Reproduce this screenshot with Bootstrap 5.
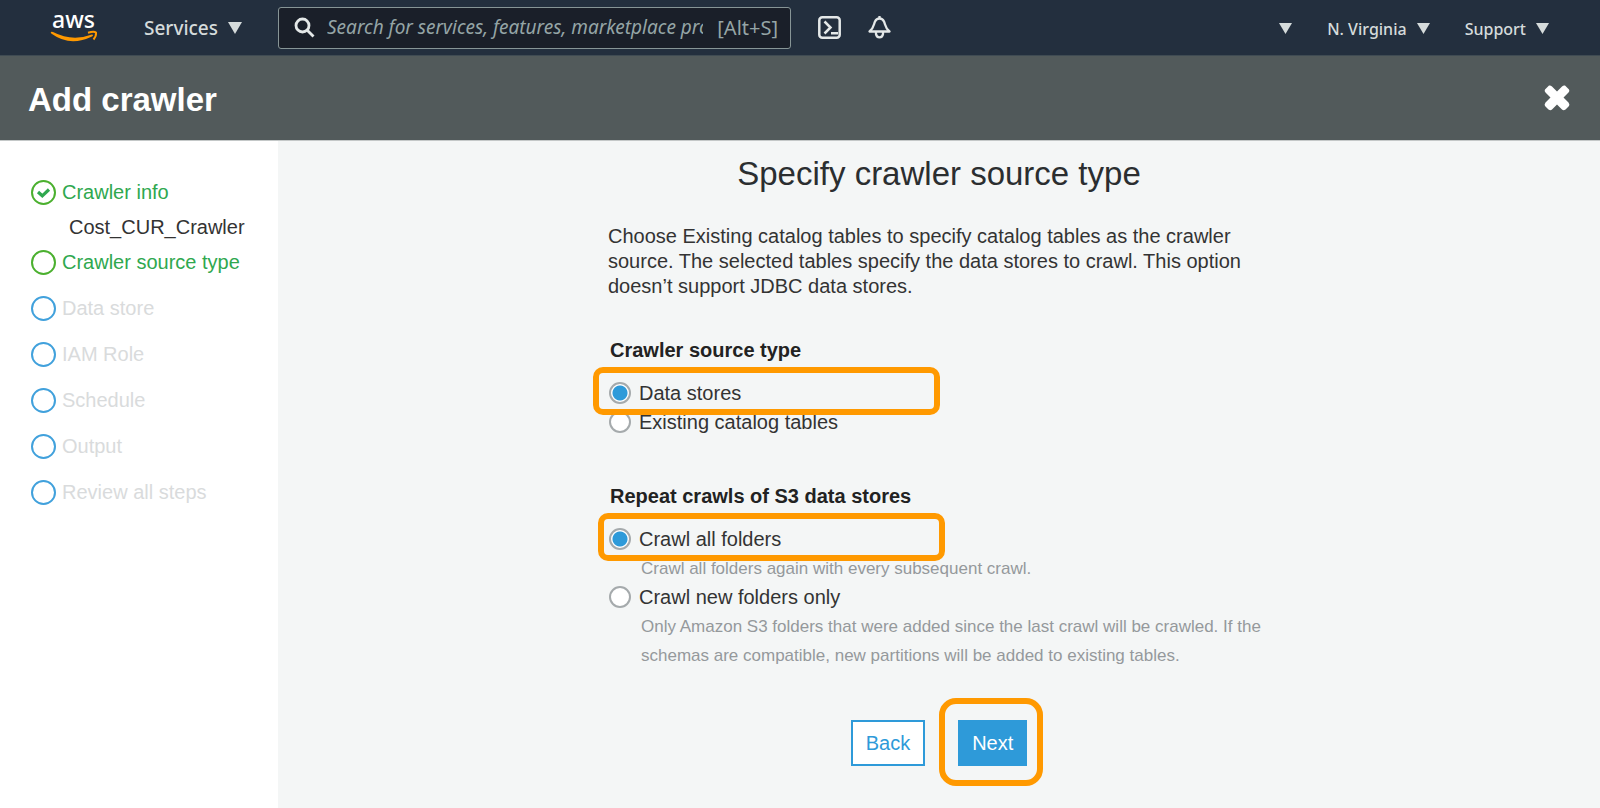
<!DOCTYPE html>
<html lang="en">
<head>
<meta charset="utf-8">
<meta name="viewport" content="width=device-width, initial-scale=1">
<title>Add crawler</title>
<link rel="stylesheet" href="https://cdn.jsdelivr.net/npm/bootstrap@5.3.0/dist/css/bootstrap.min.css">
<style>
  :root { --console-font: "Noto Sans", "Open Sans", sans-serif; --accent: #2e9ad9; --mark-orange: #ff9900; }
  body { font-family: "Liberation Sans", Arial, sans-serif; font-size: 20px; line-height: 25px; color: #333; background: #f4f6f6; }
  .topbar { background: #232f3e; height: 56px; font-family: var(--console-font); color: #d5dbdb; border-bottom: 1px solid #3f4b53; padding: 0 51px 0 50px; }
  .topbar button { color: #d5dbdb; background: none; border: 0; padding: 0; line-height: 24px; font-weight: 500; }
  .topbar svg { display: block; }
  .services { font-size: 19px; gap: 10px; margin-left: 46px; }
  .search-box { width: 513px; height: 42px; margin: 0 27px 0 36px; padding: 0 12px 0 15px; background: #1a1f29; border: 1px solid #879596; border-radius: 3px; font-size: 19px; color: #95a5a6; }
  .search-box input { min-width: 0; background: none; border: 0; outline: 0; padding: 0; margin: 0 14px 0 12px; color: inherit; font-style: italic; }
  .search-box input::placeholder { color: #95a5a6; opacity: 1; }
  .shortcut { font-size: 20px; }
  .icon-tools { gap: 27px; }
  .right-menu { gap: 35px; font-size: 16px; padding-top: 2px; }
  .right-menu button { gap: 10px; }
  .titlebar { background: #525a5b; height: 85px; padding: 0 28px; border-bottom: 1px solid #c4c8c8; }
  .titlebar h1 { font-size: 33px; line-height: 40px; color: #fff; }
  .titlebar button { background: none; border: 0; padding: 0; }
  .steps { width: 278px; background: #fff; padding: 39px 0 0 31px; }
  .steps ol { gap: 21px; }
  .steps a { color: #d9dbdc; text-decoration: none; gap: 6px; }
  .steps .done { color: #2fa84f; }
  .ring { width: 25px; height: 25px; border: 2px solid #41a1dc; border-radius: 50%; flex: none; }
  .done .ring { border-color: #4bb02f; }
  .crawler-name { padding-left: 38px; margin-top: 10px; margin-bottom: -11px; }
  .panel { padding: 13px 0 20px; }
  .panel h2 { font-size: 33px; line-height: 40px; color: #2b2e30; margin-bottom: 30px; }
  .form-area { width: 662px; max-width: 100%; }
  .intro { margin-bottom: 39px; }
  .form-area fieldset { padding-left: 1px; margin-bottom: 47px; }
  .form-area legend { font-size: 20px; line-height: 25px; font-weight: 700; color: #222; margin-bottom: 16px; padding-left: 1px; }
  .choice { min-height: 29px; gap: 8px; line-height: 29px; }
  .choice input { appearance: none; width: 22px; height: 22px; margin: 0 0 2px; flex: none; border: 2px solid #a5aaac; border-radius: 50%; background: #fff; }
  .choice input:checked { background: radial-gradient(circle, var(--accent) 0 7px, #fff 8px); }
  .hint { font-size: 17px; line-height: 29px; color: #95999c; padding-left: 32px; }
  .marked { position: relative; }
  .marked::after { content: ""; position: absolute; border: 6px solid var(--mark-orange); border-radius: 10px; pointer-events: none; }
  .choice.marked::after { width: 347px; height: 48px; top: -12px; left: -16px; }
  .choice.marked.inset::after { left: -11px; }
  .marked-button::after { inset: -22px -16px -20px -19px; border-radius: 17px; }
  .actions { gap: 33px; padding-top: 3px; }
  .actions .btn { --bs-btn-border-radius: 0; --bs-btn-font-size: 20px; --bs-btn-line-height: 28px; --bs-btn-padding-y: 7px; --bs-btn-padding-x: 13px; --bs-btn-border-width: 2px; --bs-btn-border-color: var(--accent); }
  .actions .back { --bs-btn-bg: #fff; --bs-btn-color: var(--accent); }
  .actions .next { --bs-btn-bg: var(--accent); --bs-btn-color: #fff; --bs-btn-padding-x: 12px; }
</style>
<script src="https://cdn.jsdelivr.net/npm/bootstrap@5.3.0/dist/js/bootstrap.bundle.min.js"></script>
</head>
<body class="min-vh-100 d-flex flex-column">
<header class="topbar d-flex align-items-center">
  <a href="#" aria-label="AWS home"><svg width="48" height="48" viewBox="0 0 48 48"><text x="2" y="24" font-family="Noto Sans, sans-serif" font-size="23" font-weight="500" fill="#fff">aws</text><path d="M1 28Q0 29 2 30Q20 43 42 32.500Q44 31 42 30.500Q22 38 3 28Q1.500 27.300 1 28Z" fill="#ff9900"/><path d="M38 28.800Q44 27 46 28.500Q46.500 32 43.500 35.500" fill="none" stroke="#ff9900" stroke-width="2" stroke-linejoin="round"/></svg></a>
  <button type="button" class="services d-flex align-items-center"><span>Services</span><svg width="14" height="12"><path d="M0 0H14L7 12Z" fill="currentColor"/></svg></button>
  <div class="search-box d-flex align-items-center">
    <svg class="flex-shrink-0" width="21" height="21" viewBox="0 0 21 21" fill="none" stroke="#e4e8e8" stroke-width="2.800"><circle cx="8.500" cy="8.500" r="6.500"/><path d="M13 13L19.500 19.500"/></svg>
    <input type="text" class="flex-grow-1" aria-label="Search" placeholder="Search for services, features, marketplace products, and docs">
    <span class="shortcut">[Alt+S]</span>
  </div>
  <div class="icon-tools d-flex">
    <button type="button" aria-label="CloudShell"><svg width="23" height="23" viewBox="0 0 23 23" fill="none" stroke="#e4e8e8" stroke-width="2.500"><rect x="1.300" y="1.300" width="20.400" height="20.400" rx="3"/><path d="M6.500 5.500L12.500 11.500L6.500 17.500M13 17.200H20"/></svg></button>
    <button type="button" aria-label="Notifications"><svg width="23" height="23" viewBox="0 0 23 23" fill="none" stroke="#e4e8e8" stroke-width="2.300" stroke-linejoin="round"><path d="M1.500 15.500C6 12 5.500 9 7 5.500Q8.500 2.500 11.500 2.500T16 5.500C17.500 9 17 12 21.500 15.500Z"/><path d="M11.500 0V2.500M8 16V18Q8.500 21.300 11.500 21.300T15 18V16"/></svg></button>
  </div>
  <nav class="right-menu d-flex align-items-center ms-auto" aria-label="Account">
    <button type="button" aria-label="Account"><svg width="13" height="11"><path d="M0 0H13L6.500 11Z" fill="currentColor"/></svg></button>
    <button type="button" class="d-flex align-items-center"><span>N. Virginia</span><svg width="13" height="11"><path d="M0 0H13L6.500 11Z" fill="currentColor"/></svg></button>
    <button type="button" class="d-flex align-items-center"><span>Support</span><svg width="13" height="11"><path d="M0 0H13L6.500 11Z" fill="currentColor"/></svg></button>
  </nav>
</header>
<div class="titlebar d-flex align-items-center justify-content-between">
  <h1 class="fw-bold m-0 pt-1">Add crawler</h1>
  <button type="button" aria-label="Close"><svg class="d-block" width="30" height="30" viewBox="0 0 30 30"><path d="M7 2.500Q8.500 2 10 3.500L15 8.500L20 3.500Q21.500 2 23 2.500L27 6.500Q28 8 26.500 9.500L21.500 14.500L26.500 19.500Q28 21.500 27 23L23.500 26.500Q21.500 28 20 26.500L15 21.500L10 26.500Q8.500 28 6.500 26.500L3 23Q2 21.500 3.500 19.500L8.500 14.500L3.500 9.500Q2 8 3 6.500Z" fill="#fff"/></svg></button>
</div>
<div class="d-flex flex-grow-1">
  <aside class="steps flex-shrink-0">
    <ol class="list-unstyled d-flex flex-column m-0">
      <li><a href="#" class="done d-flex align-items-center"><span class="ring"><svg class="d-block" width="21" height="21" viewBox="0 0 21 21"><path d="M5 10L9.300 13.800L16 7.500" fill="none" stroke="#2fa84f" stroke-width="3.200"/></svg></span>Crawler info</a>
        <div class="crawler-name">Cost_CUR_Crawler</div></li>
      <li><a href="#" class="done d-flex align-items-center" aria-current="step"><span class="ring"></span>Crawler source type</a></li>
      <li><a href="#" class="d-flex align-items-center"><span class="ring"></span>Data store</a></li>
      <li><a href="#" class="d-flex align-items-center"><span class="ring"></span>IAM Role</a></li>
      <li><a href="#" class="d-flex align-items-center"><span class="ring"></span>Schedule</a></li>
      <li><a href="#" class="d-flex align-items-center"><span class="ring"></span>Output</a></li>
      <li><a href="#" class="d-flex align-items-center"><span class="ring"></span>Review all steps</a></li>
    </ol>
  </aside>
  <main class="panel flex-grow-1">
    <h2 class="text-center fw-normal">Specify crawler source type</h2>
    <form class="form-area mx-auto">
      <p class="intro">Choose Existing catalog tables to specify catalog tables as the crawler source. The selected tables specify the data stores to crawl. This option doesn’t support JDBC data stores.</p>
      <fieldset>
        <legend>Crawler source type</legend>
        <div class="choice marked d-flex align-items-center"><input type="radio" name="source" id="stores" checked><label for="stores">Data stores</label></div>
        <div class="choice d-flex align-items-center"><input type="radio" name="source" id="tables"><label for="tables">Existing catalog tables</label></div>
      </fieldset>
      <fieldset>
        <legend>Repeat crawls of S3 data stores</legend>
        <div class="choice marked inset d-flex align-items-center"><input type="radio" name="repeat" id="all" checked><label for="all">Crawl all folders</label></div>
        <div class="hint">Crawl all folders again with every subsequent crawl.</div>
        <div class="choice d-flex align-items-center"><input type="radio" name="repeat" id="new"><label for="new">Crawl new folders only</label></div>
        <div class="hint">Only Amazon S3 folders that were added since the last crawl will be crawled. If the schemas are compatible, new partitions will be added to existing tables.</div>
      </fieldset>
      <div class="actions d-flex justify-content-center">
        <button type="button" class="btn back">Back</button>
        <div class="marked marked-button"><button type="button" class="btn next">Next</button></div>
      </div>
    </form>
  </main>
</div>
</body>
</html>
